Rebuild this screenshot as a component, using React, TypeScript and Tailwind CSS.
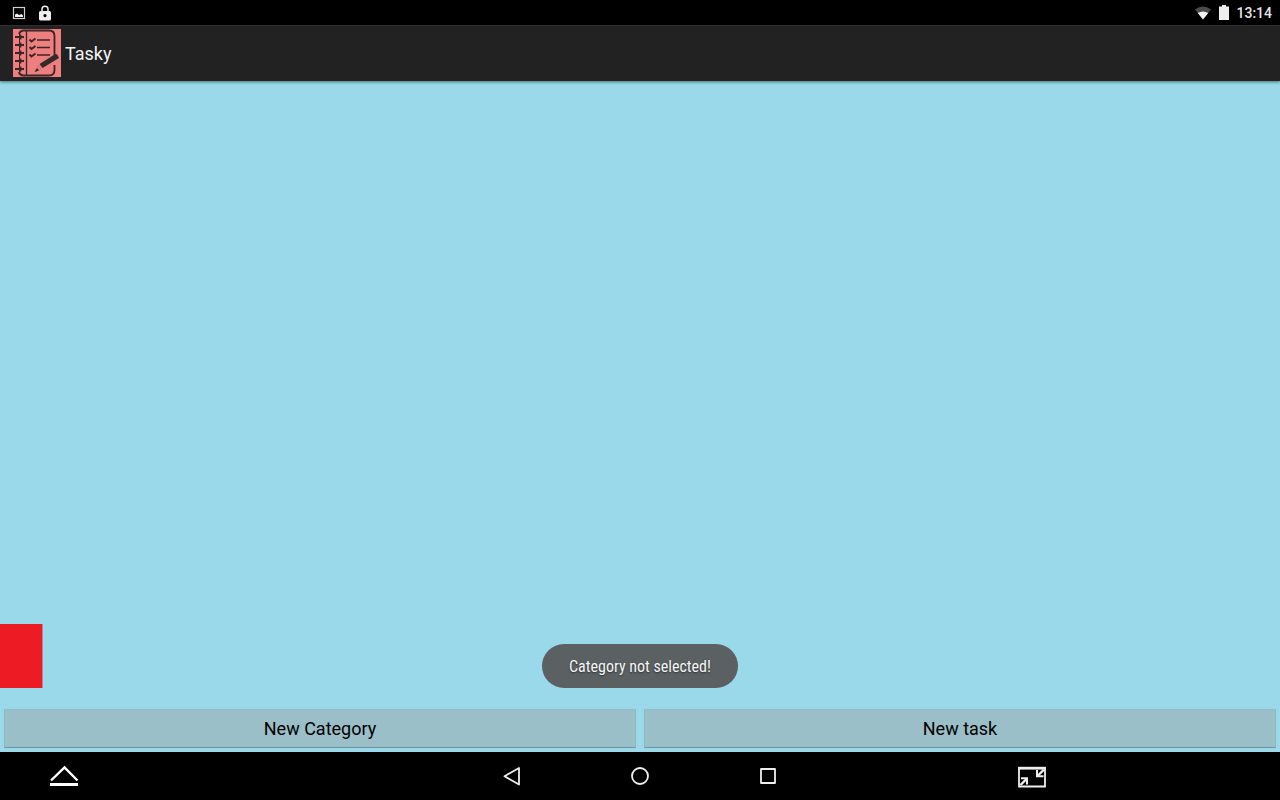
import React, { useState } from 'react';

function NotebookIcon() {
  return (
    <svg className="h-12 w-12 shrink-0" viewBox="0 0 48 48" fill="none" stroke="#3a2628" aria-hidden="true">
      <rect width="48" height="48" fill="#ee7f7f" stroke="none" />
      <path d="M10 1.500H36Q41.500 1.500 41.500 7V26M41.500 36V41Q41.500 46.500 36 46.500H10Q6.500 46 6 43M6 5Q7 2 10 1.500" strokeWidth="1.800" />
      <path d="M13.500 2V46" strokeWidth="1.300" />
      <path d="M6.500 5V43" strokeWidth="1" />
      <path d="M2 8H11M2 16H11M2 24H11M2 32H11M2 40H11" strokeWidth="1.800" />
      <path d="M7.500 5.500V10.500M7.500 13.500V18.500M7.500 21.500V26.500M7.500 29.500V34.500M7.500 37.500V42.500" strokeWidth="1.800" />
      <path d="M16.500 10.500L18.500 12.500L22.500 9.500M16.500 18L18.500 20L22.500 17M16.500 25.500L18.500 27.500L22.500 24.500" strokeWidth="2" />
      <path d="M24 11H37M24 18.500H37M24 26H37" strokeWidth="1.700" />
      <path d="M26.500 35L41.500 25.500Q43 24.500 44.500 26L46 29L29.500 39Z" fill="#352a2b" stroke="none" />
      <path d="M25.500 36L28 40L22 43Z" stroke="#b9676b" strokeWidth="0.500" />
      <path d="M21.500 43L26 41.500L24 39Z" fill="#3a2628" stroke="none" />
    </svg>
  );
}

function StatusBar() {
  return (
    <div className="flex h-[25px] shrink-0 items-center justify-between bg-black pr-2 pl-3 text-[#e6e6e6]">
      <div className="flex items-center gap-[13px]">
        <svg className="h-4 w-3.5" viewBox="0 0 14 16" aria-hidden="true">
          <rect x="1.500" y="2.500" width="11" height="11" fill="none" stroke="#d0d0d0" strokeWidth="1.200" />
          <path d="M3 12V9.500L5 8.500L7 10L9.500 9L11 10.500V12Z" fill="#eeeeee" />
        </svg>
        <svg className="h-4 w-3" viewBox="0 0 12 16" aria-hidden="true">
          <path d="M3 7V4.200A3 3 0 0 1 9 4.200V7" fill="none" stroke="#eeeeee" strokeWidth="1.500" />
          <path fillRule="evenodd" d="M1.500 6H10.500Q12 6 12 7.500V14Q12 15.500 10.500 15.500H1.500Q0 15.500 0 14V7.500Q0 6 1.500 6ZM6 9A1.600 1.600 0 1 0 6 12.200A1.600 1.600 0 1 0 6 9Z" fill="#eeeeee" />
        </svg>
      </div>
      <div className="flex items-center">
        <svg className="h-4 w-4" viewBox="0 0 16 16" aria-hidden="true">
          <path d="M8 14.500L0 4.500Q8 -1.500 16 4.500Z" fill="#4b4b4b" />
          <path d="M8 14.500L2.800 8Q8 5 13.200 8Z" fill="#f2f2f2" />
        </svg>
        <svg className="ml-2 h-4 w-2.5" viewBox="0 0 10 16" aria-hidden="true">
          <path d="M0 1.500H3V0H7V1.500H10V15H0Z" fill="#eeeeee" />
        </svg>
        <time className="ml-[7px] text-sm leading-6 font-medium">13:14</time>
      </div>
    </div>
  );
}

function NavigationBar() {
  const cell = 'flex h-12 w-32 items-center justify-center';
  return (
    <nav className="grid shrink-0 grid-cols-[1fr_auto_1fr] bg-black">
      <button className={cell} aria-label="Show drawer">
        <svg className="h-7 w-8" viewBox="0 0 32 28" fill="none" stroke="#fff" aria-hidden="true">
          <path d="M3 18.500L16.500 5.500L29.500 18.500" strokeWidth="2.400" />
          <path d="M2 22.500H30" strokeWidth="3" />
        </svg>
      </button>
      <div className="flex">
        <button className={cell} aria-label="Back">
          <svg className="h-6 w-6" viewBox="0 0 24 24" fill="none" stroke="#eee" strokeWidth="1.800" strokeLinejoin="round" aria-hidden="true">
            <path d="M19 4V20.500L4.500 12.200Z" />
          </svg>
        </button>
        <button className={cell} aria-label="Home">
          <svg className="h-6 w-6" viewBox="0 0 24 24" fill="none" stroke="#eee" strokeWidth="1.800" aria-hidden="true">
            <circle cx="12" cy="12" r="8" />
          </svg>
        </button>
        <button className={cell} aria-label="Recent apps">
          <svg className="h-6 w-6" viewBox="0 0 24 24" fill="none" stroke="#eee" strokeWidth="1.800" strokeLinejoin="round" aria-hidden="true">
            <rect x="5" y="5" width="14" height="14" />
          </svg>
        </button>
      </div>
      <div className="pl-[136px]">
        <button className={cell} aria-label="Shrink window">
          <svg className="h-6 w-7" viewBox="0 0 28 24" fill="none" stroke="#eee" aria-hidden="true">
            <path d="M1 3V22.500H27V3" strokeWidth="1.800" />
            <path d="M0 4.200H28" strokeWidth="2.800" />
            <path d="M2.500 21L8.500 15M26 5.500L20 11.500" strokeWidth="2.400" />
            <path d="M3 14.300H9V20.500M19 6V12.300H25.500" strokeWidth="2" />
          </svg>
        </button>
      </div>
    </nav>
  );
}

function ActionButton({ label, onClick }: { label: string; onClick?: () => void }) {
  return (
    <button
      onClick={onClick}
      className="h-[39px] flex-1 border border-b-[#6f929c] border-x-[#8eb4be] border-t-[#93bbc5] bg-[#9abfc8] text-lg leading-6 text-black"
    >
      {label}
    </button>
  );
}

export default function App() {
  const [message, setMessage] = useState('Category not selected!');
  return (
    <div className="flex min-h-screen flex-col bg-[#99d9ea] font-['Roboto',sans-serif]">
      <StatusBar />
      <header className="z-10 flex h-14 shrink-0 items-center gap-1 bg-[#222222] pl-[13px] shadow-[inset_0_1px_0_#2e2e2e,0_1px_3px_rgba(0,0,0,0.5)]">
        <NotebookIcon />
        <h1 className="pt-px text-lg leading-6 text-[#f3f3f3]">Tasky</h1>
      </header>
      <main className="relative flex flex-1 flex-col justify-end">
        <div className="mb-5 h-16 w-[43px] border-r border-[#b98590] bg-[#ed1c24]" />
        {message && (
          <div className="pointer-events-none absolute inset-x-0 bottom-16 flex justify-center">
            <div
              role="status"
              className="rounded-full bg-[#5b6062] px-[27px] pt-3 pb-2.5 font-['Roboto_Condensed','Roboto',sans-serif] text-base leading-[22px] text-[#f5f5f5] [text-shadow:0_1px_2px_#0008]"
            >
              {message}
            </div>
          </div>
        )}
        <div className="flex gap-2 px-1 pt-px pb-1">
          <ActionButton label="New Category" onClick={() => setMessage('')} />
          <ActionButton label="New task" onClick={() => setMessage('Category not selected!')} />
        </div>
      </main>
      <NavigationBar />
    </div>
  );
}
